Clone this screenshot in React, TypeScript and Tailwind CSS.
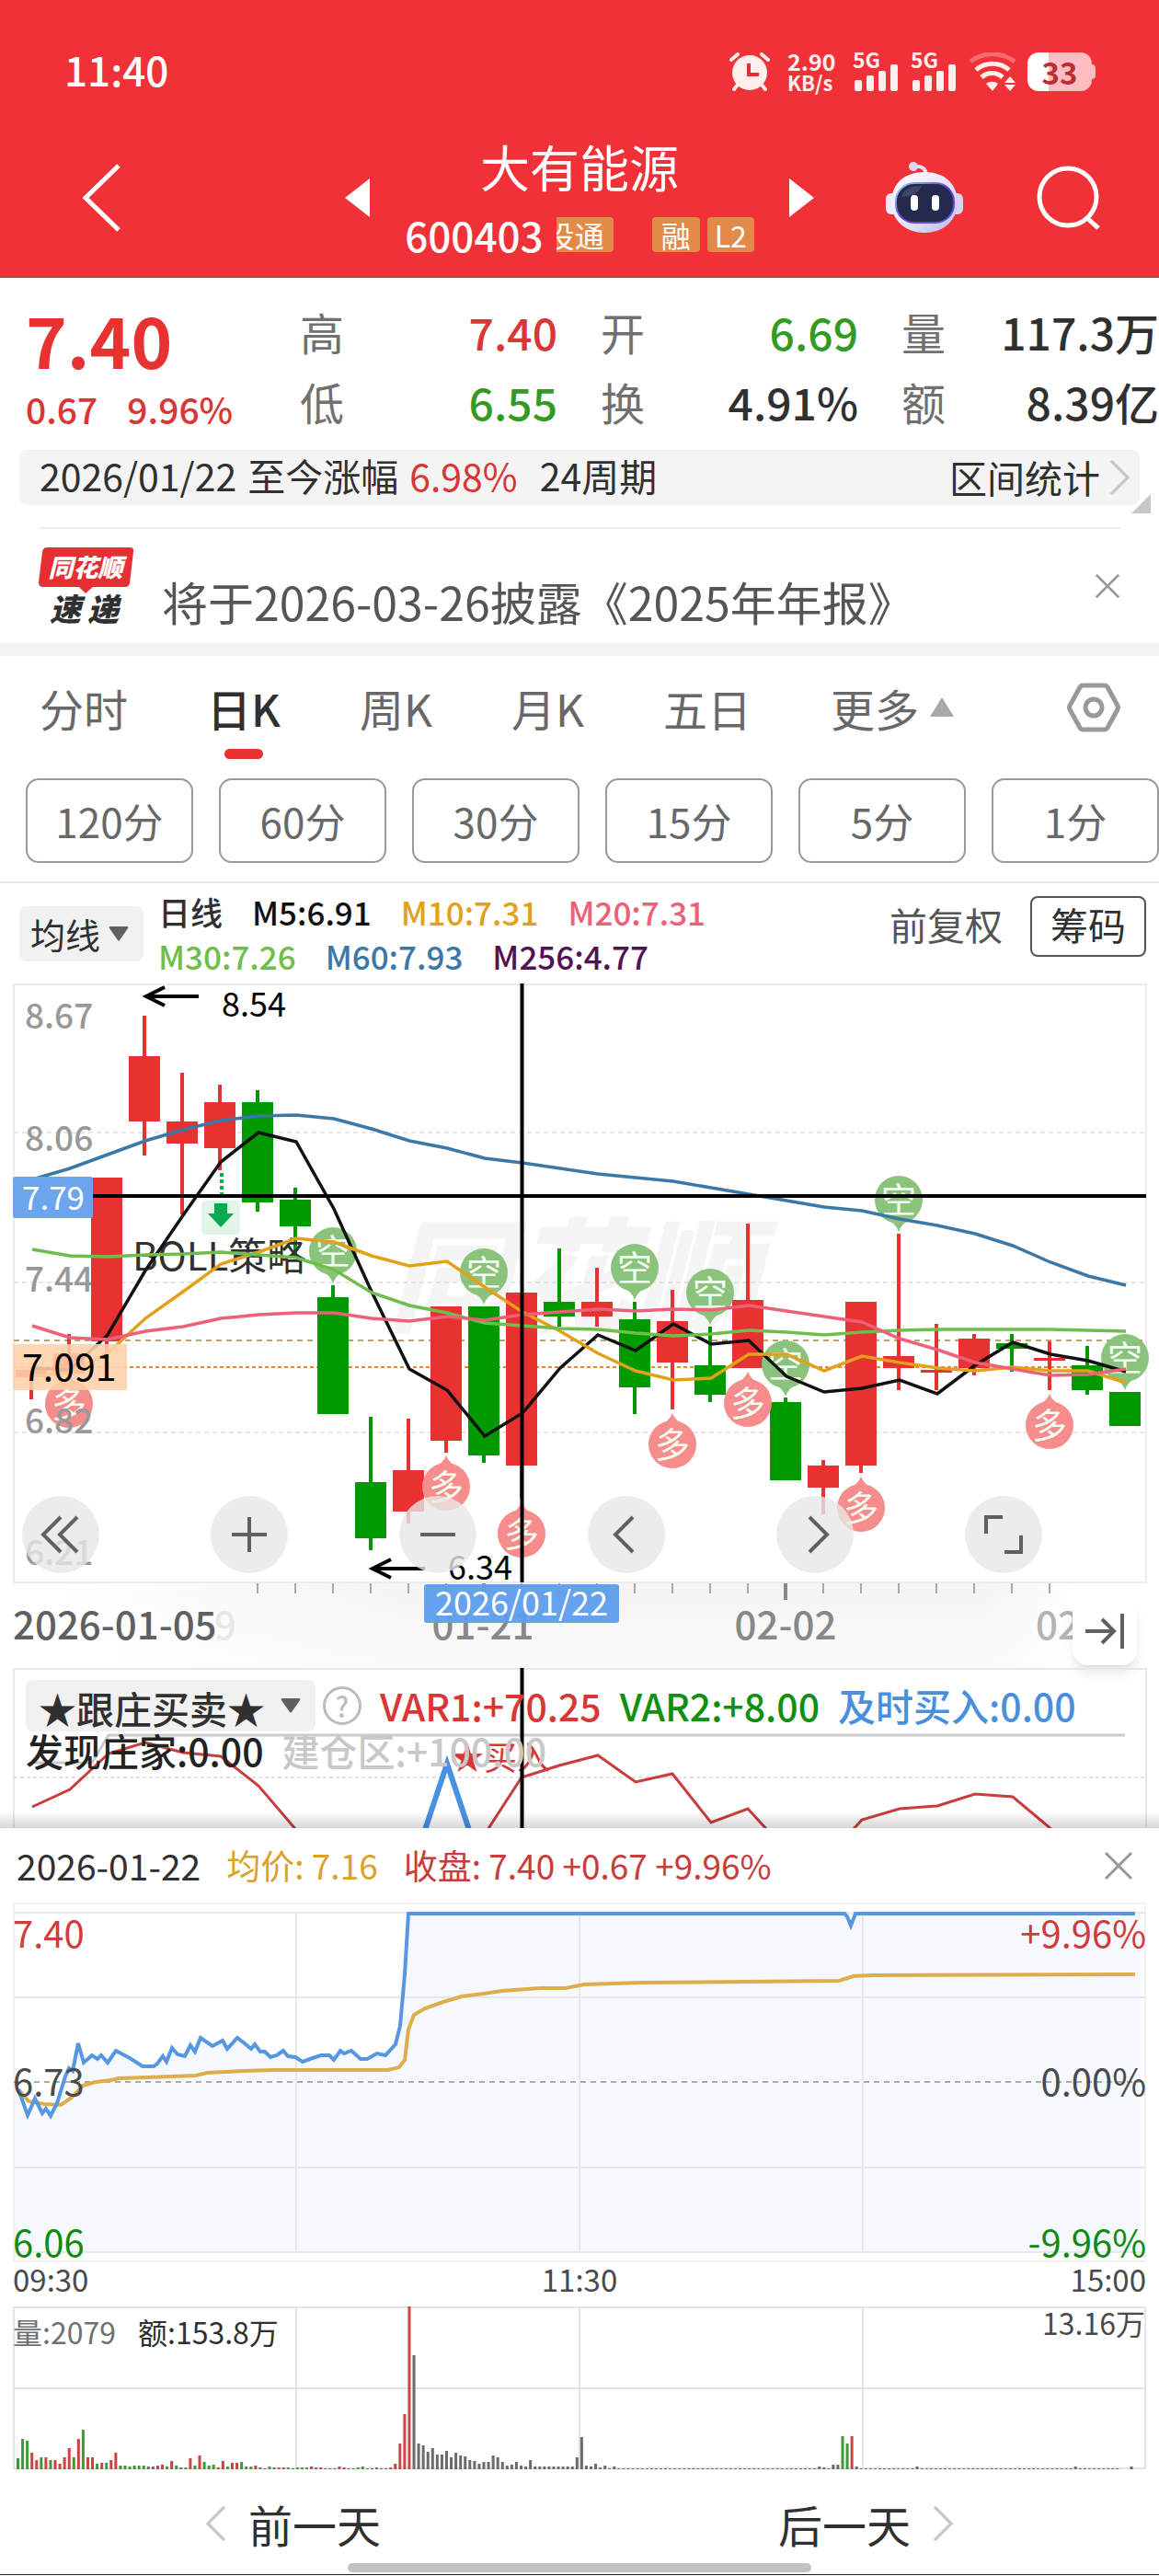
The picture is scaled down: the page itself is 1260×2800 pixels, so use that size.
import type { ReactNode } from "react";

const RED = "#e83131";
const GREEN = "#009a00";

// Distance between two candles, and the centre of the first one.
const STEP = 41;
const FIRST = 34;
const cx = (i: number) => FIRST + i * STEP;

const STATS = [
  { label: "高", value: "7.40", color: "text-[#d93636]" },
  { label: "开", value: "6.69", color: "text-[#359a24]" },
  { label: "量", value: "117.3万", color: "text-[#303030]" },
  { label: "低", value: "6.55", color: "text-[#359a24]" },
  { label: "换", value: "4.91%", color: "text-[#303030]" },
  { label: "额", value: "8.39亿", color: "text-[#303030]" },
];

const PERIODS = ["分时", "日K", "周K", "月K", "五日"];
const MINUTES = ["120分", "60分", "30分", "15分", "5分", "1分"];

// high, body top, body bottom, low
const CANDLES: [string, number, number, number, number][] = [
  ["r", 420, 420, 428, 452],
  ["r", 381, 402, 424, 424],
  ["r", 211, 211, 389, 415],
  ["r", 35, 79, 150, 187],
  ["r", 97, 150, 174, 251],
  ["r", 110, 129, 179, 203],
  ["g", 116, 129, 238, 248],
  ["g", 222, 235, 264, 298],
  ["g", 328, 341, 468, 468],
  ["g", 471, 542, 603, 616],
  ["r", 473, 529, 574, 587],
  ["r", 351, 351, 497, 510],
  ["g", 351, 351, 513, 521],
  ["r", 336, 336, 524, 560],
  ["g", 288, 346, 362, 373],
  ["r", 309, 346, 362, 373],
  ["g", 346, 365, 439, 468],
  ["r", 333, 367, 412, 463],
  ["g", 373, 415, 447, 455],
  ["r", 261, 344, 418, 418],
  ["g", 450, 455, 540, 540],
  ["r", 518, 524, 548, 577],
  ["r", 346, 346, 524, 532],
  ["r", 272, 405, 418, 442],
  ["r", 370, 420, 423, 442],
  ["r", 381, 386, 418, 426],
  ["g", 381, 391, 397, 422],
  ["r", 389, 407, 410, 442],
  ["g", 394, 415, 442, 447],
  ["g", 444, 444, 481, 481],
];

const AVERAGES = [
  {
    color: "#3a78a8",
    values: [
      213, 201, 186, 171, 159, 149, 144, 143, 147, 158, 171, 179, 190, 195, 201,
      207, 211, 215, 222, 229, 236, 243, 247, 256, 263, 272, 285, 303, 318, 328,
    ],
  },
  {
    color: "#111111",
    values: [
      418, 420, 382, 312, 252, 194, 162, 172, 245, 335, 419, 442, 492, 467, 418,
      382, 399, 370, 392, 388, 427, 444, 440, 431, 446, 415, 390, 403, 410, 422,
    ],
  },
  {
    color: "#e3a01c",
    values: [
      427, 423, 402, 364, 335, 305, 292, 277, 281, 296, 307, 302, 330, 357, 378,
      402, 421, 431, 429, 403, 403, 421, 405, 412, 418, 421, 417, 421, 421, 434,
    ],
  },
  {
    color: "#6fbd4c",
    values: [
      289, 296, 297, 295, 294, 292, 295, 298, 311, 336, 350, 358, 369, 372, 375,
      376, 380, 383, 381, 377, 379, 382, 379, 377, 376, 376, 376, 376, 377, 378,
    ],
  },
  {
    color: "#ee6078",
    values: [
      372, 385, 387, 378, 373, 364, 360, 358, 358, 364, 367, 362, 366, 360, 357,
      354, 356, 354, 355, 350, 356, 362, 368, 386, 398, 412, 419, 426, 425, 419,
    ],
  },
];

// candle index, centre of the bubble
const SHORTS = [[8, 291], [12, 314], [16, 309], [18, 336], [20, 414], [23, 235], [29, 407]];
const LONGS = [[1, 457], [11, 547], [13, 598], [17, 501], [19, 456], [22, 570], [27, 480]];

const PRICE_LINE =
  "20,203 30,231 38,213 46,229 50,224 55,232 62,218 71,189 75,180 79,183 85,153 91,174 100,166 106,170 110,166 117,174 126,161 141,169 155,178 167,178 171,175 177,167 181,173 187,158 193,165 201,167 207,155 212,162 218,147 231,156 242,150 247,159 258,147 267,154 273,159 277,154 283,162 288,162 294,168 301,166 308,161 313,167 321,168 329,173 340,169 349,166 358,166 363,171 370,161 374,164 382,161 392,170 399,170 410,164 419,166 430,154 435,134 440,78 444,12 918,12 921,15 925,25 930,12 1234,12";
const AVG_LINE =
  "20,203 31,216 48,219 66,220 78,212 90,199 104,195 121,193 129,191 161,190 213,188 225,185 265,183 297,182 422,182 434,179 440,171 444,138 450,122 462,115 482,108 502,102 526,99 546,96 587,93 615,93 635,89 699,87 912,85 928,80 948,79 1234,78";

const VOLUMES =
  "g12 g33 g31 r18 r10 g13 r13 g10 r10 r6 r13 r23 g13 r33 g43 r13 r13 g6 r7 g7 r10 r18 g4 g4 g3 g4 g4 g4 k3 k3 r4 r5 g3 r9 g4 k2 g2 r12 g4 r15 g8 g4 g5 r2 r9 g3 r7 r7 g8 g3 g3 r4 k2 k1 g3 k2 r2 r2 g2 k1 g2 g2 g2 r3 k2 r2 k1 k1 k1 r3 r2 k1 k1 g2 g3 k1 k1 r2 r1 k1 r2 r6 r28 r60 r177 k124 k28 k26 k19 k23 k16 k16 k20 k13 k18 k15 k14 k10 k9 k6 k8 k8 k15 k13 k8 k4 k5 k8 k4 k3 k10 k3 k3 k3 k3 k3 k3 k3 k3 k3 k13 k35 k4 k3 k6 k2 k4 k1 k3".split(
    " ",
  );
while (VOLUMES.length < 172) VOLUMES.push("k1");
VOLUMES.push("k3", "k2", "k1", "k5", "k5", "g36", "g28", "r36", "k3");
while (VOLUMES.length < 237) VOLUMES.push(VOLUMES.length === 193 || VOLUMES.length === 227 ? "k3" : "k1");
VOLUMES.push("k0", "k0", "k3");

const VOLUME_COLORS: Record<string, string> = { r: "#c94444", g: "#3f9a35", k: "#6b6b6b" };

function Chevron({ left, className }: { left?: boolean; className: string }) {
  return (
    <svg viewBox="0 0 24 42" fill="none" stroke="currentColor" strokeWidth="3.5" className={className} aria-hidden="true">
      <path d={left ? "M22 2 3 21l19 19" : "M2 2l19 19L2 40"} />
    </svg>
  );
}

function Close({ className }: { className: string }) {
  return (
    <svg viewBox="0 0 32 32" fill="none" stroke="currentColor" strokeWidth="3" className={className} aria-hidden="true">
      <path d="M2 2l28 28M30 2 2 30" />
    </svg>
  );
}

function Signal() {
  return (
    <svg viewBox="0 0 50 42" className="h-[42px] w-[50px] overflow-visible" fill="#ffeeee" aria-hidden="true">
      <text x="0" y="17" fontSize="23" fontWeight="700" fontFamily="Noto Sans CJK SC, sans-serif">
        5G
      </text>
      <rect x="2" y="30" width="8" height="12" rx="2" />
      <rect x="15" y="25" width="8" height="17" rx="2" />
      <rect x="28" y="20" width="8" height="22" rx="2" />
      <rect x="41" y="13" width="8" height="29" rx="2" />
    </svg>
  );
}

function StatusBar() {
  return (
    <div className="flex items-start justify-between pt-[55px] pr-[69px] pl-[70px] text-white">
      <span className="text-[44px] leading-10 font-medium">11:40</span>
      <div className="flex items-center">
        <svg viewBox="0 0 44 42" className="h-[42px] w-11" aria-hidden="true">
          <g stroke="#ffeeee" strokeWidth="4" strokeLinecap="round">
            <path d="M2 8l7-6M42 8l-7-6M9 35l-4 5M35 35l4 5" />
          </g>
          <circle cx="22" cy="22" r="19" fill="#ffeeee" />
          <path d="M21 12v12h11" fill="none" stroke="#e02c33" strokeWidth="4" />
        </svg>
        <div className="ml-[19px] flex w-[52px] flex-col text-[25px] leading-[23px] font-bold text-[#ffeeee]">
          <span>2.90</span>
          <span className="text-[22px]">KB/s</span>
        </div>
        <div className="ml-[19px] flex gap-[13px]">
          <Signal />
          <Signal />
        </div>
        <svg viewBox="0 0 52 42" className="ml-[13px] h-[42px] w-[52px]" fill="none" strokeWidth="5" aria-hidden="true">
          <path d="M2 10C16-1 36-1 50 10" stroke="#f86b70" />
          <path d="M8 19c10-9 26-9 36 0M14 27c7-6 16-6 23 0" stroke="#ffeeee" />
          <path d="M19 34c4-3 9-3 13 0l-6 8zM39 33l6-7 6 7zM39 35l6 7 6-7z" fill="#ffeeee" />
        </svg>
        <div className="ml-3 flex h-[42px] w-[70px] items-center justify-center rounded-xl bg-linear-to-r from-white from-33% to-[#fdbcc0] to-33%">
          <span className="text-[33px] leading-10 font-bold text-[#bb2c33]">33</span>
        </div>
        <span className="h-4 w-1 rounded-r bg-[#fdbcc0]" />
      </div>
    </div>
  );
}

function Robot() {
  return (
    <svg viewBox="0 0 84 78" className="h-[78px] w-[84px]" aria-hidden="true">
      <defs>
        <linearGradient id="shell" x1="0" y1="0" x2="1" y2="1">
          <stop offset="0" stopColor="#ffffff" />
          <stop offset="0.6" stopColor="#e3e0f8" />
          <stop offset="1" stopColor="#b9b4ea" />
        </linearGradient>
        <linearGradient id="rim" x1="0" y1="0" x2="1" y2="1">
          <stop offset="0" stopColor="#8fd8ee" />
          <stop offset="0.5" stopColor="#6a3fd0" />
          <stop offset="1" stopColor="#5c54e0" />
        </linearGradient>
      </defs>
      <path d="M31 5c9-1 13 3 13 10" fill="none" stroke="#e8e2f6" strokeWidth="4" />
      <circle cx="30" cy="5" r="5" fill="#dcd8f2" />
      <rect x="0" y="34" width="14" height="23" rx="6" fill="#eceafb" />
      <rect x="70" y="34" width="14" height="23" rx="6" fill="#d7d3f5" />
      <path d="M42 11c26 0 36 17 36 33S66 77 42 77 6 60 6 44s10-33 36-33z" fill="url(#shell)" />
      <rect x="11" y="23" width="63" height="43" rx="20" fill="#232a4e" stroke="url(#rim)" strokeWidth="2" />
      <path d="M17 38c2-9 10-12 22-12-3 8-12 12-22 12z" fill="#48507a" opacity=".7" />
      <rect x="27" y="36" width="8" height="17" rx="4" fill="#fff" />
      <rect x="50" y="36" width="8" height="17" rx="4" fill="#fff" />
    </svg>
  );
}

function TitleBar() {
  return (
    <div className="grid grid-cols-[1fr_510px_1fr] items-center pt-11 text-white">
      <button type="button" aria-label="返回" className="justify-self-start pl-[89px]">
        <svg viewBox="0 0 42 74" fill="none" stroke="#fff" strokeWidth="5" className="h-[74px] w-[42px]">
          <path d="M40 2 4 37l36 35" />
        </svg>
      </button>
      <div className="flex items-center justify-between">
        <button type="button" aria-label="上一只">
          <svg viewBox="0 0 27 42" className="h-[42px] w-[27px]">
            <path d="M27 0v42L0 21z" fill="#fff" />
          </svg>
        </button>
        <div className="flex flex-col items-center">
          <h1 className="text-[54px] leading-[72px]">大有能源</h1>
          <div className="mt-2 flex items-center text-[32px] leading-[38px]">
            <span className="text-[44px] leading-[60px] font-medium">600403</span>
            <span className="ml-3.5 flex w-[62px] justify-end overflow-hidden rounded-r bg-[#e28b48] pr-2.5 whitespace-nowrap">
              投通
            </span>
            <span className="ml-[42px] rounded bg-[#e28b48] px-2.5">融</span>
            <span className="ml-2 rounded bg-[#e28b48] px-2">L2</span>
          </div>
        </div>
        <button type="button" aria-label="下一只">
          <svg viewBox="0 0 27 42" className="h-[42px] w-[27px]">
            <path d="M0 0v42l27-21z" fill="#fff" />
          </svg>
        </button>
      </div>
      <div className="flex items-center justify-end gap-20 pr-[63px]">
        <button type="button" aria-label="助手">
          <Robot />
        </button>
        <button type="button" aria-label="搜索">
          <svg viewBox="0 0 70 70" fill="none" stroke="#fff" strokeWidth="5" className="h-[70px] w-[70px]">
            <circle cx="34" cy="34" r="31" />
            <path d="M55 57l12 11" />
          </svg>
        </button>
      </div>
    </div>
  );
}

function Quote() {
  return (
    <section className="grid grid-cols-[251px_1fr] gap-x-[47px] pt-5 pb-[15px] pl-7">
      <div className="text-[#d93636]">
        <p className="text-[76px] leading-[92px] font-bold text-[#e83131]">7.40</p>
        <p className="flex gap-8 text-[39px] leading-[60px] font-medium">
          <span>0.67</span>
          <span>9.96%</span>
        </p>
      </div>
      <dl className="grid grid-cols-3 gap-x-[47px] text-[48px] leading-[76px]">
        {STATS.map((stat) => (
          <div key={stat.label} className="flex justify-between whitespace-nowrap">
            <dt className="text-[#707070]">{stat.label}</dt>
            <dd className={stat.color + " font-medium"}>{stat.value}</dd>
          </div>
        ))}
      </dl>
    </section>
  );
}

function RangeBar() {
  return (
    <div className="relative px-[21px]">
      <a href="#range" className="flex h-[60px] items-center justify-between rounded-lg bg-[#f4f4f4] pr-2.5 pl-[22px] text-[41px] text-[#303030]">
        <span className="flex pb-1">
          <span>2026/01/22</span>
          <span className="ml-3">至今涨幅</span>
          <span className="ml-3 text-[#d93636]">6.98%</span>
          <span className="ml-6">24周期</span>
        </span>
        <span className="flex items-center gap-2.5">
          区间统计
          <Chevron className="h-10 w-[23px] text-[#c8c8c8]" />
        </span>
      </a>
      <svg viewBox="0 0 21 21" className="absolute right-[9px] -bottom-[9px] h-[21px] w-[21px]" aria-hidden="true">
        <path d="M21 0v21H0z" fill="#c8c8c8" />
      </svg>
    </div>
  );
}

function News() {
  return (
    <section className="mx-[42px] mt-6 flex h-[126px] items-center border-t-2 border-[#ededed]">
      <svg viewBox="0 0 104 84" className="h-[84px] w-[104px]" fontFamily="Noto Sans CJK SC, sans-serif" fontWeight="900" fontStyle="italic">
        <path d="M9 0h90q5 0 4 5l-4 34q-1 4-5 4H59l-8 7-7-7H5q-5 0-5-5l4-33q1-5 5-5z" fill="#e62f33" />
        <text x="51" y="32" fontSize="27" fill="#fff" textAnchor="middle">
          同花顺
        </text>
        <text x="12" y="80" fontSize="34" fill="#303030">
          速
        </text>
        <text x="53" y="80" fontSize="34" fill="#303030">
          递
        </text>
      </svg>
      <a href="#news" className="ml-[30px] flex-1 pt-8 text-[50px] text-[#555]">
        将于2026-03-26披露《2025年年报》
      </a>
      <button type="button" aria-label="关闭" className="text-[#999]">
        <Close className="h-7 w-7" />
      </button>
    </section>
  );
}

function Periods() {
  return (
    <nav className="flex h-[133px] items-center gap-[86px] pr-[42px] pb-[22px] pl-[43px] text-[48px] text-[#686868]">
      {PERIODS.map((name) =>
        name === "日K" ? (
          <button key={name} type="button" className="relative flex flex-col items-center font-medium text-[#303030]">
            {name}
            <span className="absolute -bottom-5 h-[11px] w-[42px] rounded-full bg-[#e83131]" />
          </button>
        ) : (
          <button key={name} type="button">
            {name}
          </button>
        ),
      )}
      <button type="button" className="flex items-center gap-3 whitespace-nowrap">
        更多
        <svg viewBox="0 0 26 22" className="h-[22px] w-[26px]">
          <path d="M13 0l13 21H0z" fill="#a8a8a8" />
        </svg>
      </button>
      <button type="button" aria-label="设置" className="ml-auto">
        <svg viewBox="0 0 58 54" fill="none" stroke="#999" strokeWidth="5" className="h-[54px] w-[58px]">
          <path d="M18 3h22q3 0 4 2l11 20q1 2 0 4L44 49q-1 2-4 2H18q-3 0-4-2L3 29q-1-2 0-4L14 5q1-2 4-2z" />
          <circle cx="29" cy="27" r="9" />
        </svg>
      </button>
    </nav>
  );
}

function Caret() {
  return (
    <svg viewBox="0 0 22 16" className="h-4 w-[22px]" aria-hidden="true">
      <path d="M2 0h18q2 0 1 2l-9 13q-1 1-2 0L1 2q-1-2 1-2z" fill="#606060" />
    </svg>
  );
}

function Picker({ label, value, className }: { label: string; value: string; className: string }) {
  return (
    <div className="relative flex items-center">
      <select aria-label={label} className={"appearance-none rounded-lg bg-[#f1f1f1] " + className}>
        <option>{value}</option>
      </select>
      <span className="pointer-events-none absolute right-4">
        <Caret />
      </span>
    </div>
  );
}

function Averages() {
  return (
    <section className="flex h-[111px] items-center border-t-2 border-[#e6e6e6] pr-3.5 pl-[21px]">
      <Picker label="指标" value="均线" className="h-[60px] w-[135px] pl-3 text-[38px] text-[#303030]" />
      <div className="ml-4 flex-1 text-[35px] leading-12 font-medium">
        <p className="flex gap-8">
          <span className="text-[#303030]">日线</span>
          <span className="text-[#111]">M5:6.91</span>
          <span className="text-[#e3a01c]">M10:7.31</span>
          <span className="text-[#ee6078]">M20:7.31</span>
        </p>
        <p className="flex gap-8">
          <span className="text-[#6fbd4c]">M30:7.26</span>
          <span className="text-[#3a78a8]">M60:7.93</span>
          <span className="text-[#551155]">M256:4.77</span>
        </p>
      </div>
      <div className="flex items-center gap-[30px] pb-4 text-[41px]">
        <button type="button" className="pb-1 leading-none text-[#555]">
          前复权
        </button>
        <button type="button" className="h-[66px] rounded-lg border-2 border-[#555] px-5 pb-1 leading-none text-[#303030]">
          筹码
        </button>
      </div>
    </section>
  );
}

function Bubble({ x, y, long }: { x: number; y: number; long?: boolean }) {
  return (
    <g transform={`translate(${x} ${y})`}>
      <path
        d={long ? "M-14-20Q-3-26 0-34 3-26 14-20z" : "M-14 20Q-3 26 0 35 3 26 14 20z"}
        fill={long ? "#f78c8c" : "#8bc37d"}
      />
      <circle r="26" fill={long ? "#f78c8c" : "#8bc37d"} />
      <text y="14" fontSize="38" fill="#f3fff0" textAnchor="middle">
        {long ? "多" : "空"}
      </text>
    </g>
  );
}

function RoundButton({ label, children }: { label: string; children: ReactNode }) {
  return (
    <button type="button" aria-label={label} className="flex h-[84px] w-[84px] items-center justify-center rounded-full bg-[#e7e7e7]/80">
      <svg viewBox="0 0 48 48" fill="none" stroke="#606060" strokeWidth="4" className="h-12 w-12">
        {children}
      </svg>
    </button>
  );
}

function CandleChart() {
  return (
    <section className="relative">
      <svg viewBox="0 0 1260 744" className="block w-full" fontFamily="Noto Sans CJK SC, sans-serif">
        <defs>
          <linearGradient id="axis" x1="0" x2="1">
            <stop offset="0" stopColor="#fff" />
            <stop offset="0.1" stopColor="#fdfdfd" />
            <stop offset="0.35" stopColor="#f4f4f4" />
            <stop offset="0.85" stopColor="#f4f4f4" />
            <stop offset="0.93" stopColor="#fff" />
          </linearGradient>
          <linearGradient id="axisFade" x1="0" x2="0" y1="0" y2="1">
            <stop offset="0" stopColor="#fff" stopOpacity="0" />
            <stop offset="1" stopColor="#fff" stopOpacity="0.7" />
          </linearGradient>
        </defs>
        <rect y="652" width="1260" height="92" fill="url(#axis)" />
        <rect y="652" width="1260" height="92" fill="url(#axisFade)" />
        <rect x="15" y="1" width="1231" height="650" fill="none" stroke="#ececec" strokeWidth="2" />
        <text x="622" y="368" fontSize="134" fontWeight="900" fontStyle="italic" fill="#f5f5f5" textAnchor="middle">
          同花顺
        </text>
        <path d="M15 162h1230M15 325h1230M15 488h1230" stroke="#dedede" strokeWidth="1.5" strokeDasharray="5 4" />
        <path d="M15 388h1230" stroke="#bba276" strokeWidth="2" strokeDasharray="6 5" />
        <path d="M15 417h1230" stroke="#e0883e" strokeWidth="2" strokeDasharray="4 3" />

        <g fontSize="37" fontWeight="500" fill="#999">
          <text x="27" y="49">8.67</text>
          <text x="27" y="182">8.06</text>
          <text x="27" y="335">7.44</text>
          <text x="27" y="632">6.21</text>
        </g>

        {CANDLES.map(([kind, high, top, bottom, low], i) => (
          <g key={i} fill={kind === "r" ? RED : GREEN}>
            <rect x={cx(i) - 2} y={high} width="4" height={low - high} />
            <rect x={cx(i) - 17} y={top} width="34" height={bottom - top} />
          </g>
        ))}

        <path d="M241 206v26" stroke="#0aab50" strokeWidth="4" strokeDasharray="4 3" />
        <rect x="219" y="236" width="42" height="37" rx="5" fill="#e0f4e8" />
        <path d="M233 239h14v11h7l-14 15-14-15h7z" fill="#0aab50" />
        <text x="144" y="312" fontSize="42" fill="#303030">
          BOLL策略
        </text>

        {SHORTS.map(([i, y]) => (
          <Bubble key={i} x={cx(i)} y={y} />
        ))}
        {LONGS.map(([i, y]) => (
          <Bubble key={i} x={cx(i)} y={y} long />
        ))}
        <text x="27" y="489" fontSize="37" fontWeight="500" fill="#999">
          6.82
        </text>

        {AVERAGES.map((line) => (
          <polyline
            key={line.color}
            points={line.values.map((y, i) => `${cx(i) + 1},${y}`).join(" ")}
            fill="none"
            stroke={line.color}
            strokeWidth="3.5"
          />
        ))}

        <g fill="none" stroke="#000" strokeWidth="4">
          <path d="M567.500 0V651M14 231H1246" />
          <path d="M216 14h-58M179 4l-20 10 20 10M462 636h-58M425 626l-20 10 20 10" />
        </g>
        <g fontSize="36">
          <text x="241" y="36">8.54</text>
          <text x="487" y="648">6.34</text>
        </g>

        <rect x="14" y="210" width="87" height="45" rx="3" fill="#6ca5ee" />
        <text x="24" y="246" fontSize="35" fill="#fff">
          7.79
        </text>
        <rect x="14" y="392" width="124" height="50" fill="#ffd0a8" opacity="0.88" />
        <text x="24" y="432" fontSize="41">
          7.091
        </text>

        {CANDLES.map((_, i) =>
          i < 6 || i > 27 ? null : (
            <path
              key={i}
              d={i === 12 || i === 20 ? `M${cx(i)} 652v18` : `M${cx(i)} 652v11`}
              stroke={i === 12 || i === 20 ? "#888" : "#aaa"}
              strokeWidth={i === 12 || i === 20 ? 4 : 2}
            />
          ),
        )}
        <g fontSize="42" fontWeight="500" fill="#888">
          <text x="233" y="713" fill="#e8e8e8">9</text>
          <text x="14" y="713" fill="#606060">2026-01-05</text>
          <text x="525" y="713" textAnchor="middle">01-21</text>
          <text x="854" y="713" textAnchor="middle">02-02</text>
          <text x="1126" y="713" fill="#b4b4b4">02</text>
        </g>
        <rect x="461" y="653" width="212" height="42" rx="3" fill="#5f9eec" opacity="0.96" />
        <text x="567" y="687" fontSize="36" fill="#fff" textAnchor="middle">
          2026/01/22
        </text>
      </svg>

      <div className="absolute top-[557px] left-6 flex gap-[121px]">
        <RoundButton label="最早">
          <path d="M24 5 5 24l19 19M42 5 23 24l19 19" />
        </RoundButton>
        <RoundButton label="放大">
          <path d="M24 5v38M5 24h38" />
        </RoundButton>
        <RoundButton label="缩小">
          <path d="M5 24h38" />
        </RoundButton>
        <RoundButton label="左移">
          <path d="M31 5 12 24l19 19" />
        </RoundButton>
        <RoundButton label="右移">
          <path d="M18 5l19 19-19 19" />
        </RoundButton>
        <RoundButton label="全屏">
          <path d="M5 23V5h18M25 43h18V25" />
        </RoundButton>
      </div>
      <button
        type="button"
        aria-label="最新"
        className="absolute right-6 bottom-[3px] flex h-[75px] w-[70px] items-center justify-center rounded-2xl bg-white shadow-lg"
      >
        <svg viewBox="0 0 42 38" fill="none" stroke="#606060" strokeWidth="4" className="h-[38px] w-[42px]">
          <path d="M0 19h29M18 6l13 13-13 13M40 0v38" />
        </svg>
      </button>
    </section>
  );
}

function SignalChart() {
  return (
    <section className="relative">
      <svg viewBox="0 0 1260 174" className="block w-full" fontFamily="Noto Sans CJK SC, sans-serif">
        <defs>
          <linearGradient id="edge" x1="0" x2="0" y1="0" y2="1">
            <stop offset="0" stopColor="#000" stopOpacity="0" />
            <stop offset="1" stopColor="#000" stopOpacity="0.16" />
          </linearGradient>
        </defs>
        <path d="M15 176V1h1231v175" fill="none" stroke="#e8e8e8" strokeWidth="2" />
        <path d="M15 119h1230" stroke="#d8d8d8" strokeWidth="1.5" strokeDasharray="4 3" />
        <path d="M35 103h65l18-30h1105" fill="none" stroke="#cbcbcb" strokeWidth="3" />
        <text x="490" y="111" fontSize="36" fill="#d93636">
          ★买入
        </text>
        <g fill="none" stroke="#cb3d3d" strokeWidth="3">
          <path d="M35 151l41-19 42-39 40-12 41 11 41 4 41 32 41 48" />
          <path d="M530 176l37-57 41-13 42-11 41 29 40-9 42 53 40-15 22 24" />
          <path d="M927 176l10-11 41-12 41-3 41-13 41 3 43 36" />
        </g>
        <path d="M462 176l24-72 24 72" fill="none" stroke="#4a90e2" strokeWidth="6" />
        <path d="M567.500 0v174" stroke="#000" strokeWidth="4" />
        <rect y="156" width="1260" height="18" fill="url(#edge)" />
      </svg>
      <div className="absolute inset-x-0 top-[13px] pl-7 text-[41px] font-medium">
        <div className="flex h-14 items-center whitespace-nowrap">
          <Picker label="副图指标" value="★跟庄买卖★" className="h-14 w-[315px] pl-3.5 text-[41px] text-[#303030]" />
          <span className="mx-2 flex h-[42px] w-[42px] items-center justify-center rounded-full border-[3px] border-[#bbb] text-[30px] leading-none text-[#bbb]">
            ?
          </span>
          <span className="ml-3 text-[#d93636]">VAR1:+70.25</span>
          <span className="ml-5 text-[#118f11]">VAR2:+8.00</span>
          <span className="ml-5 text-[#4a8fdc]">及时买入:0.00</span>
        </div>
        <p className="flex gap-5 leading-[40px]">
          <span className="text-[#222]">发现庄家:0.00</span>
          <span className="text-[#c8c8c8]">建仓区:+100.00</span>
        </p>
      </div>
    </section>
  );
}

function DaySheet() {
  return (
    <section className="border-b border-[#222] bg-white">
      <header className="flex h-[81px] items-center gap-7 pr-7 pl-[18px] text-[37px]">
        <span className="text-[39px] text-[#303030]">2026-01-22</span>
        <span className="text-[#dca127]">均价: 7.16</span>
        <span className="text-[#c93c3c]">收盘: 7.40 +0.67 +9.96%</span>
        <button type="button" aria-label="关闭" className="ml-auto text-[#999]">
          <Close className="h-8 w-8" />
        </button>
      </header>

      <svg viewBox="0 0 1260 392" className="block w-full" fontFamily="Noto Sans CJK SC, sans-serif" fontSize="40">
        <polygon points={`${PRICE_LINE} 1240,12 1240,380 15,380 15,203`} fill="#f5f9fe" />
        <g fill="none" stroke="#e6e8ea" strokeWidth="2">
          <rect x="15" y="1" width="1230" height="389" stroke="#f0f0f0" />
          <path d="M15 11h1230M15 103h1230M15 288h1230M15 380h1230M322 11v369M630 11v369M938 11v369" />
        </g>
        <path d="M15 195h1230" stroke="#a9abae" strokeWidth="2" strokeDasharray="6 5" />
        <polyline points={AVG_LINE} fill="none" stroke="#dfae4c" strokeWidth="4" />
        <polyline points={PRICE_LINE} fill="none" stroke="#5796e0" strokeWidth="4" />
        <text x="14" y="49" fill="#cf3c3c">7.40</text>
        <text x="14" y="210" fill="#4a4a4a">6.73</text>
        <text x="14" y="385" fill="#118a11">6.06</text>
        <g textAnchor="end">
          <text x="1246" y="49" fill="#cf3c3c">+9.96%</text>
          <text x="1246" y="210" fill="#4a4a4a">0.00%</text>
          <text x="1246" y="385" fill="#118a11">-9.96%</text>
        </g>
      </svg>
      <div className="flex h-[47px] items-center justify-between px-3.5 pb-3 text-[33px] text-[#4a4a4a]">
        <span>09:30</span>
        <span>11:30</span>
        <span>15:00</span>
      </div>

      <svg viewBox="0 0 1260 178" className="block w-full" fontFamily="Noto Sans CJK SC, sans-serif" fontSize="32">
        <g fill="none" stroke="#e4e4e4" strokeWidth="2">
          <path d="M15 1h1230v175H15zM15 89h1230M322 1v175M630 1v175M938 1v175" />
        </g>
        {VOLUMES.map((item, i) => {
          const height = Number(item.slice(1));
          return (
            <rect key={i} x={18 + i * 5.065} y={177 - height} width="3" height={height} fill={VOLUME_COLORS[item[0]]} />
          );
        })}
        <text x="14" y="41" fill="#707070">量:2079</text>
        <text x="150" y="41" fill="#303030">额:153.8万</text>
        <text x="1245" y="31" fill="#4a4a4a" textAnchor="end">13.16万</text>
      </svg>

      <nav className="flex h-[101px] items-center justify-between px-[223px] pt-3.5 text-[48px] text-[#303030]">
        <button type="button" className="flex items-center gap-6">
          <Chevron left className="h-10 w-[23px] text-[#c8c8c8]" />
          前一天
        </button>
        <button type="button" className="flex items-center gap-6">
          后一天
          <Chevron className="h-10 w-[23px] text-[#c8c8c8]" />
        </button>
      </nav>
      <div className="mx-auto mb-0.5 h-2.5 w-2/5 rounded-full bg-[#c2c2c2]" />
    </section>
  );
}

export default function App() {
  return (
    <main className="overflow-hidden bg-white font-['Noto_Sans_CJK_SC',sans-serif]">
      <header className="h-[302px] border-b-2 border-[#c0414a] bg-[#f13138]">
        <StatusBar />
        <TitleBar />
      </header>
      <Quote />
      <RangeBar />
      <News />
      <div className="h-3.5 bg-[#f4f4f4]" />
      <Periods />
      <div className="flex gap-7 overflow-hidden pb-5 pl-7">
        {MINUTES.map((name) => (
          <button
            key={name}
            type="button"
            className="h-[92px] min-w-0 flex-1 rounded-[14px] border-2 border-[#999] text-[44px] leading-none text-[#686868]"
          >
            {name}
          </button>
        ))}
      </div>
      <Averages />
      <CandleChart />
      <SignalChart />
      <DaySheet />
    </main>
  );
}
